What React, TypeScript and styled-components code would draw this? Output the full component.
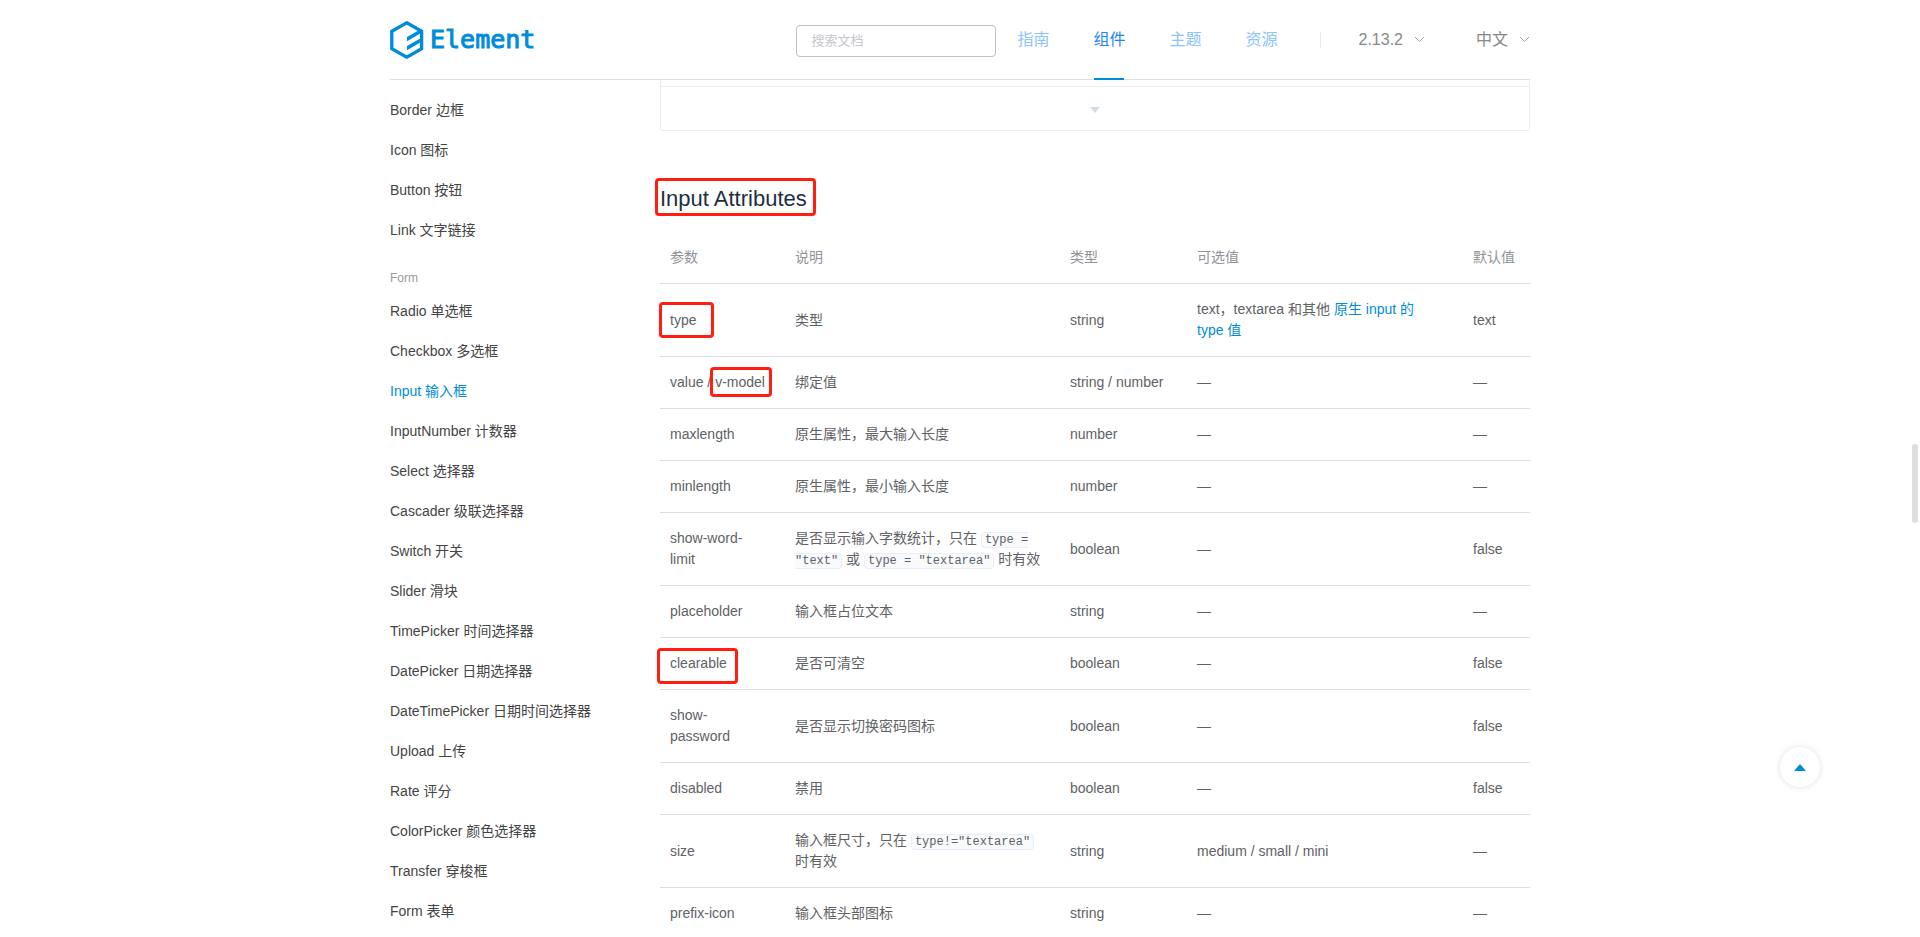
import React from "react";
import styled, { createGlobalStyle, css } from "styled-components";

const BLUE = "#008cdc";
const LINE = "#dcdfe6";

const GlobalStyle = createGlobalStyle`
  * { box-sizing: border-box; }
  body {
    margin: 0;
    background: #fff;
    overflow: hidden;
    font-family: "Liberation Sans", Arial, "Noto Sans CJK SC", sans-serif;
    font-size: 14px;
    line-height: 21px;
    color: #606266;
  }
  a { text-decoration: none; }
`;

const Page = styled.div`
  height: 100vh;
  overflow: hidden;
`;

const Container = styled.div`
  width: 100%;
  max-width: 1140px;
  margin: 0 auto;
`;

const Header = styled(Container).attrs({ as: "header" })`
  display: flex;
  align-items: center;
  height: 80px;
  border-bottom: 1px solid ${LINE};
`;

const Logo = styled.a`
  display: flex;
  align-items: center;
  gap: 6px;
  height: 38px;
  margin: 0 auto 0 0;
  color: ${BLUE};
  font-family: "DejaVu Sans Mono", monospace;
  font-size: 25px;
  line-height: 38px;
  -webkit-text-stroke: 1px ${BLUE};
`;

const SearchBox = styled.input`
  width: 200px;
  height: 32px;
  margin: 2px 21px 0 0;
  padding: 0 14px;
  border: 1px solid #c0c0c4;
  border-radius: 4px;
  background: #fff;
  font: inherit;
  font-size: 13px;
  outline: 0;
  &::placeholder { color: #c4c6cc; opacity: 1; }
`;

const Nav = styled.nav`
  display: flex;
  gap: 44px;
  height: 79px;
`;

const NavLink = styled.a<{ $active?: boolean }>`
  position: relative;
  font-size: 16px;
  line-height: 79px;
  color: ${(p) => (p.$active ? "#1989fa" : "#8cc4fd")};
  ${(p) =>
    p.$active &&
    css`
      &::after {
        content: "";
        position: absolute;
        left: 1px;
        right: 1px;
        bottom: -1px;
        height: 2px;
        background: ${BLUE};
      }
    `}
`;

const Divider = styled.span`
  width: 1px;
  height: 16px;
  margin: 0 38px 0 42px;
  background: #ebebeb;
`;

const Switchers = styled.div`
  display: flex;
  gap: 51px;
`;

const Switcher = styled.button`
  display: flex;
  align-items: center;
  gap: 11px;
  padding: 0;
  border: 0;
  background: none;
  font: inherit;
  font-size: 16px;
  line-height: 24px;
  color: #888;
`;

const Body = styled(Container)`
  display: flex;
  align-items: flex-start;
`;

const Sidebar = styled.aside`
  flex: 0 0 270px;
  padding-top: 10px;
`;

const Menu = styled.ul`
  margin: 0;
  padding: 0;
  list-style: none;
`;

const MenuTitle = styled.h3`
  margin: 15px 0 0;
  font-size: 12px;
  font-weight: 400;
  line-height: 26px;
  color: #999;
`;

const MenuLink = styled.a<{ $active?: boolean }>`
  display: block;
  line-height: 40px;
  white-space: nowrap;
  color: ${(p) => (p.$active ? BLUE : "#444")};
`;

const Main = styled.main`
  flex: 1;
  min-width: 0;
`;

const Demo = styled.section`
  padding-top: 6px;
  border: 1px solid #ebebeb;
  border-top: 0;
  border-radius: 0 0 3px 3px;
`;

const DemoToggle = styled.button`
  display: flex;
  align-items: center;
  justify-content: center;
  width: 100%;
  height: 44px;
  padding: 2px 0 0;
  border: 0;
  border-top: 1px solid #eaeefb;
  background: #fff;
`;

const Title = styled.h2`
  margin: 53px 0 18px;
  font-size: 22px;
  font-weight: 400;
  line-height: 30px;
  color: #1f2f3d;
`;

const Table = styled.table`
  width: 100%;
  table-layout: fixed;
  border-collapse: collapse;
  text-align: left;
`;

const Col = styled.col<{ $width?: number }>`
  width: ${(p) => (p.$width ? `${p.$width}px` : "auto")};
`;

const cell = css`
  padding: 15px 14px 15px 15px;
  border-bottom: 1px solid ${LINE};
  &:first-child { padding-left: 10px; }
`;

const Th = styled.th`
  ${cell}
  font-weight: 400;
  color: #909399;
`;

const Td = styled.td`
  ${cell}
`;

const TextLink = styled.a`
  color: ${BLUE};
`;

const Code = styled.code`
  padding: 0 3px;
  border: 1px solid #eaeefb;
  border-radius: 4px;
  background: #f9fafc;
  font-family: "Liberation Mono", "Courier New", monospace;
  font-size: 12px;
  line-height: 12px;
`;

const Marked = styled.span<{ $inset: string }>`
  position: relative;
  &::after {
    content: "";
    position: absolute;
    inset: ${(p) => p.$inset};
    border: 3px solid #ff1e10;
    border-radius: 4px;
    pointer-events: none;
  }
`;

const BackTop = styled.button`
  position: fixed;
  right: 100px;
  bottom: 150px;
  display: flex;
  align-items: center;
  justify-content: center;
  width: 40px;
  height: 40px;
  padding: 0;
  border: 0;
  border-radius: 50%;
  background: #fff;
  box-shadow: 0 0 6px rgba(0, 0, 0, 0.12);
`;

const ScrollThumb = styled.div`
  position: fixed;
  top: 444px;
  right: 2px;
  width: 6px;
  height: 79px;
  border-radius: 3px;
  background: #dddee0;
`;

const LogoMark = () => (
  <svg width="34" height="38" viewBox="0 0 34 38" aria-hidden="true">
    <path
      d="M16.8 1.8 31.6 10.2V27.8L16.8 36.2 1.8 27.8V10.2Z"
      fill="none"
      stroke={BLUE}
      strokeWidth="3.3"
    />
    <path d="M17 16 32 7.4V11.6L17 20.2ZM17 25 32 16.4V20.6L17 29.2Z" fill={BLUE} />
  </svg>
);

const Chevron = () => (
  <svg width="11" height="7" viewBox="0 0 11 7" aria-hidden="true">
    <path d="M1 1 5.5 5.5 10 1" fill="none" stroke="#aaa" />
  </svg>
);

type Row = [React.ReactNode, React.ReactNode, string, React.ReactNode, string];

const NONE = "—";

const rows: Row[] = [
  [
    <Marked $inset="-10px -18px -10px -11px">type</Marked>,
    "类型",
    "string",
    <>
      text，textarea 和其他 <TextLink href="#input-types">原生 input 的 type 值</TextLink>
    </>,
    "text",
  ],
  [
    <>
      value / <Marked $inset="-7px -7px -7px -5px">v-model</Marked>
    </>,
    "绑定值",
    "string / number",
    NONE,
    NONE,
  ],
  ["maxlength", "原生属性，最大输入长度", "number", NONE, NONE],
  ["minlength", "原生属性，最小输入长度", "number", NONE, NONE],
  [
    "show-word-limit",
    <>
      是否显示输入字数统计，只在 <Code>type = "text"</Code> 或 <Code>type = "textarea"</Code> 时有效
    </>,
    "boolean",
    NONE,
    "false",
  ],
  ["placeholder", "输入框占位文本", "string", NONE, NONE],
  [<Marked $inset="-7px -11px -13px -13px">clearable</Marked>, "是否可清空", "boolean", NONE, "false"],
  ["show-password", "是否显示切换密码图标", "boolean", NONE, "false"],
  ["disabled", "禁用", "boolean", NONE, "false"],
  [
    "size",
    <>
      输入框尺寸，只在 <Code>type!="textarea"</Code> 时有效
    </>,
    "string",
    "medium / small / mini",
    NONE,
  ],
  ["prefix-icon", "输入框头部图标", "string", NONE, NONE],
];

const basicItems = ["Border 边框", "Icon 图标", "Button 按钮", "Link 文字链接"];
const formItems = [
  "Radio 单选框",
  "Checkbox 多选框",
  "Input 输入框",
  "InputNumber 计数器",
  "Select 选择器",
  "Cascader 级联选择器",
  "Switch 开关",
  "Slider 滑块",
  "TimePicker 时间选择器",
  "DatePicker 日期选择器",
  "DateTimePicker 日期时间选择器",
  "Upload 上传",
  "Rate 评分",
  "ColorPicker 颜色选择器",
  "Transfer 穿梭框",
  "Form 表单",
];

const MenuList = ({ items }: { items: string[] }) => (
  <Menu>
    {items.map((item) => (
      <li key={item}>
        <MenuLink href={`#${item.split(" ")[0].toLowerCase()}`} $active={item === "Input 输入框"}>
          {item}
        </MenuLink>
      </li>
    ))}
  </Menu>
);

export default function App() {
  return (
    <Page>
      <GlobalStyle />
      <Header>
        <Logo href="#home">
          <LogoMark />
          Element
        </Logo>
        <SearchBox type="search" placeholder="搜索文档" aria-label="搜索文档" />
        <Nav>
          {["指南", "组件", "主题", "资源"].map((label) => (
            <NavLink key={label} href={`#${label}`} $active={label === "组件"}>
              {label}
            </NavLink>
          ))}
        </Nav>
        <Divider />
        <Switchers>
          <Switcher type="button">
            2.13.2 <Chevron />
          </Switcher>
          <Switcher type="button">
            中文 <Chevron />
          </Switcher>
        </Switchers>
      </Header>
      <Body>
        <Sidebar>
          <MenuList items={basicItems} />
          <MenuTitle>Form</MenuTitle>
          <MenuList items={formItems} />
        </Sidebar>
        <Main>
          <Demo>
            <DemoToggle type="button" aria-label="显示代码">
              <svg width="10" height="6" viewBox="0 0 10 6" aria-hidden="true">
                <path d="M0 0H10L5 6Z" fill="#d3dce6" />
              </svg>
            </DemoToggle>
          </Demo>
          <Title>
            <Marked $inset="-8px -9px -5px -5px">Input Attributes</Marked>
          </Title>
          <Table>
            <colgroup>
              <Col $width={120} />
              <Col $width={275} />
              <Col $width={127} />
              <Col />
              <Col $width={72} />
            </colgroup>
            <thead>
              <tr>
                {["参数", "说明", "类型", "可选值", "默认值"].map((h) => (
                  <Th key={h} scope="col">
                    {h}
                  </Th>
                ))}
              </tr>
            </thead>
            <tbody>
              {rows.map((row, r) => (
                <tr key={r}>
                  {row.map((value, c) => (
                    <Td key={c}>{value}</Td>
                  ))}
                </tr>
              ))}
            </tbody>
          </Table>
        </Main>
      </Body>
      <BackTop type="button" aria-label="回到顶部">
        <svg width="12" height="7" viewBox="0 0 12 7" aria-hidden="true">
          <path d="M0 7 6 0 12 7Z" fill={BLUE} />
        </svg>
      </BackTop>
      <ScrollThumb />
    </Page>
  );
}
